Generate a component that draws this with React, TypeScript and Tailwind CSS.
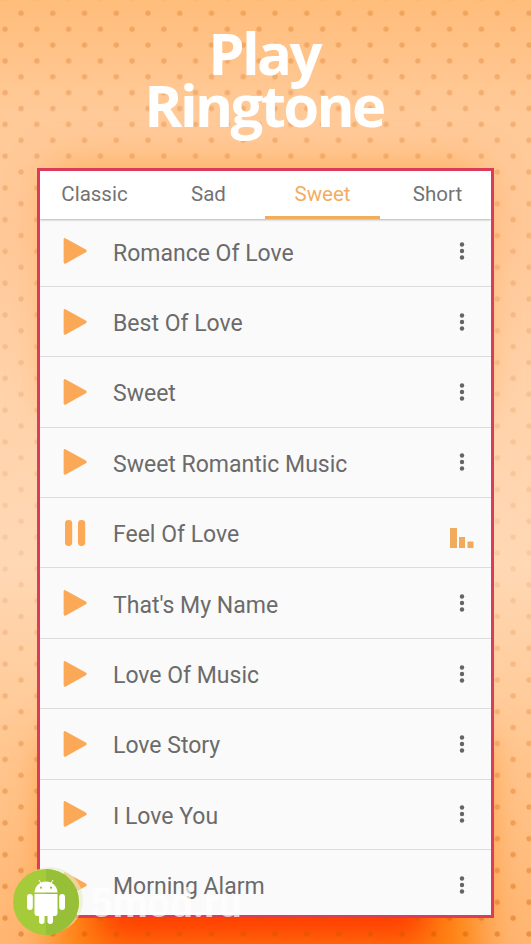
import { clsx } from "clsx";

const tabs = ["Classic", "Sad", "Sweet", "Short"];

const tracks = [
  "Romance Of Love",
  "Best Of Love",
  "Sweet",
  "Sweet Romantic Music",
  "Feel Of Love",
  "That's My Name",
  "Love Of Music",
  "Love Story",
  "I Love You",
  "Morning Alarm",
];

const playing = "Feel Of Love";

function PlayIcon() {
  return (
    <svg viewBox="0 0 24 28" className="h-7 w-6 fill-[#fba857]">
      <path d="M.6 2.800Q.6 .2 2.800 1.400L22.800 12.600Q24.600 14 22.800 15.200L2.800 26.400Q.6 27.600 .6 25Z" />
    </svg>
  );
}

function PauseIcon() {
  return (
    <svg viewBox="0 0 24 28" className="h-7 w-6 fill-[#fba857]">
      <rect x="2" y="1" width="7.200" height="26" rx="3.400" />
      <rect x="15" y="1" width="7.200" height="26" rx="3.400" />
    </svg>
  );
}

function MoreIcon() {
  return (
    <svg viewBox="0 0 6 20" className="mr-[26px] h-5 w-1.5 fill-[#646464]">
      <circle cx="3" cy="3.500" r="2.200" />
      <circle cx="3" cy="10" r="2.200" />
      <circle cx="3" cy="16.500" r="2.200" />
    </svg>
  );
}

function BarsIcon() {
  return (
    <svg viewBox="0 0 24 20" className="mt-[10px] mr-[17px] h-5 w-6 fill-[#f0ab5c]">
      <rect width="7" height="20" x="0" />
      <rect x="9" y="9" width="6" height="11" />
      <rect x="17.500" y="13.500" width="6" height="6.500" />
    </svg>
  );
}

function Backdrop() {
  return (
    <div className="absolute inset-0 overflow-hidden bg-[linear-gradient(180deg,#ffbd7b_0%,#ffca98_12%,#ffc898_25%,#ffd3ab_42%,#ffd8b4_60%,#ffc68f_80%,#ffb570_100%)]">
      <div className="absolute top-[168px] left-[52px] h-[240px] w-[428px] bg-[#ff9f38]/70 blur-[20px]" />
      <div className="absolute top-[740px] left-[52px] h-[250px] w-[428px] bg-[#ff8412] blur-[20px]" />
      <div className="absolute top-[850px] left-[98px] h-[92px] w-[330px] bg-[#ff3c00] blur-[18px]" />
      <svg className="absolute inset-0 h-full w-full">
        <defs>
          <pattern id="dots" x="5.100" y="-2.600" width="31.750" height="31.750" patternUnits="userSpaceOnUse">
            <g fill="#c85a00">
              <circle cx="15.900" cy="15.900" r="2.700" />
              <circle cx="0" cy="0" r="2.700" />
              <circle cx="31.750" cy="0" r="2.700" />
              <circle cx="0" cy="31.750" r="2.700" />
              <circle cx="31.750" cy="31.750" r="2.700" />
            </g>
          </pattern>
          <linearGradient id="fade" x1="0" y1="0" x2="0" y2="1">
            <stop offset="0" stopColor="#fff" stopOpacity="0.270" />
            <stop offset="0.300" stopColor="#fff" stopOpacity="0.170" />
            <stop offset="0.600" stopColor="#fff" stopOpacity="0.100" />
            <stop offset="1" stopColor="#fff" stopOpacity="0.400" />
          </linearGradient>
          <mask id="dotFade">
            <rect width="531" height="944" fill="url(#fade)" />
          </mask>
        </defs>
        <rect width="531" height="944" fill="url(#dots)" mask="url(#dotFade)" />
      </svg>
    </div>
  );
}

function AndroidBadge() {
  return (
    <svg viewBox="0 0 72 70" className="absolute top-[866px] left-[13px] h-[70px] w-[72px]">
      <circle cx="37" cy="34" r="33" fill="#e4efc4" opacity="0.600" />
      <g transform="translate(0 3)">
        <circle cx="33" cy="33" r="33" fill="#a6cb3a" />
        <path d="M33 0A33 33 0 0 1 33 66Z" fill="#98bf38" />
        <g fill="#fff">
          <path d="M21.500 23.500C22 16.500 27 12.500 33 12.500S44 16.500 44.500 23.500Z" />
          <path d="M26 11l3 5M40 11l-3 5" stroke="#fff" />
          <path d="M21.500 25H44.500V44Q44.500 47 41.500 47H24.500Q21.500 47 21.500 44Z" />
          <rect x="14" y="25" width="5.800" height="16" rx="2.900" />
          <rect x="46.200" y="25" width="5.800" height="16" rx="2.900" />
          <rect x="26" y="40" width="5.500" height="15" rx="2.700" />
          <rect x="34.500" y="40" width="5.500" height="15" rx="2.700" />
        </g>
        <circle cx="28" cy="18.700" r="1.100" fill="#a4c639" />
        <circle cx="38" cy="18.700" r="1.100" fill="#96bb36" />
      </g>
    </svg>
  );
}

export default function App() {
  return (
    <div className="relative h-[944px] w-[531px] overflow-hidden font-['Roboto',sans-serif]">
      <Backdrop />
      <div className="relative flex flex-col items-center">
        <h1 className="h-[168px] pt-[27px] pr-[3px] text-center font-['Open_Sans',sans-serif] text-[58px] leading-[52px] font-bold tracking-[-2.600px] text-white">
          Play
          <br />
          Ringtone
        </h1>
        <main className="h-[750px] w-[457px] overflow-hidden border-[3px] border-[#dc3c5a] bg-[#fafafa]">
          <nav className="relative grid h-[48px] grid-cols-[109px_116px_115px_111px] bg-white shadow-[0_1px_2px_rgba(0,0,0,0.28)]">
            {tabs.map((tab) => (
              <button
                key={tab}
                className={clsx(
                  "border-b-[3px] pt-0.5 text-[20.500px]",
                  tab === "Sweet" ? "border-[#f2ad5c] text-[#f2ad62]" : "border-transparent text-[#737373]",
                  tab === "Sad" && "pl-[3px]",
                  tab === "Short" && "pl-1",
                )}
              >
                {tab}
              </button>
            ))}
          </nav>
          <ul className="-mt-[2.500px]">
            {tracks.map((track) => (
              <li key={track} className="flex h-[70.400px] items-center border-b border-[#dcdcdc] pl-[23px]">
                {track === playing ? <PauseIcon /> : <PlayIcon />}
                <span className="ml-[26px] flex-1 pt-[5.500px] text-[23px] text-[#6b6b6b]">{track}</span>
                {track === playing ? <BarsIcon /> : <MoreIcon />}
              </li>
            ))}
          </ul>
        </main>
      </div>
      <span className="absolute top-[884px] left-[90px] text-[40px] leading-[40px] font-bold text-white/70">
        5mod.ru
      </span>
      <AndroidBadge />
    </div>
  );
}
